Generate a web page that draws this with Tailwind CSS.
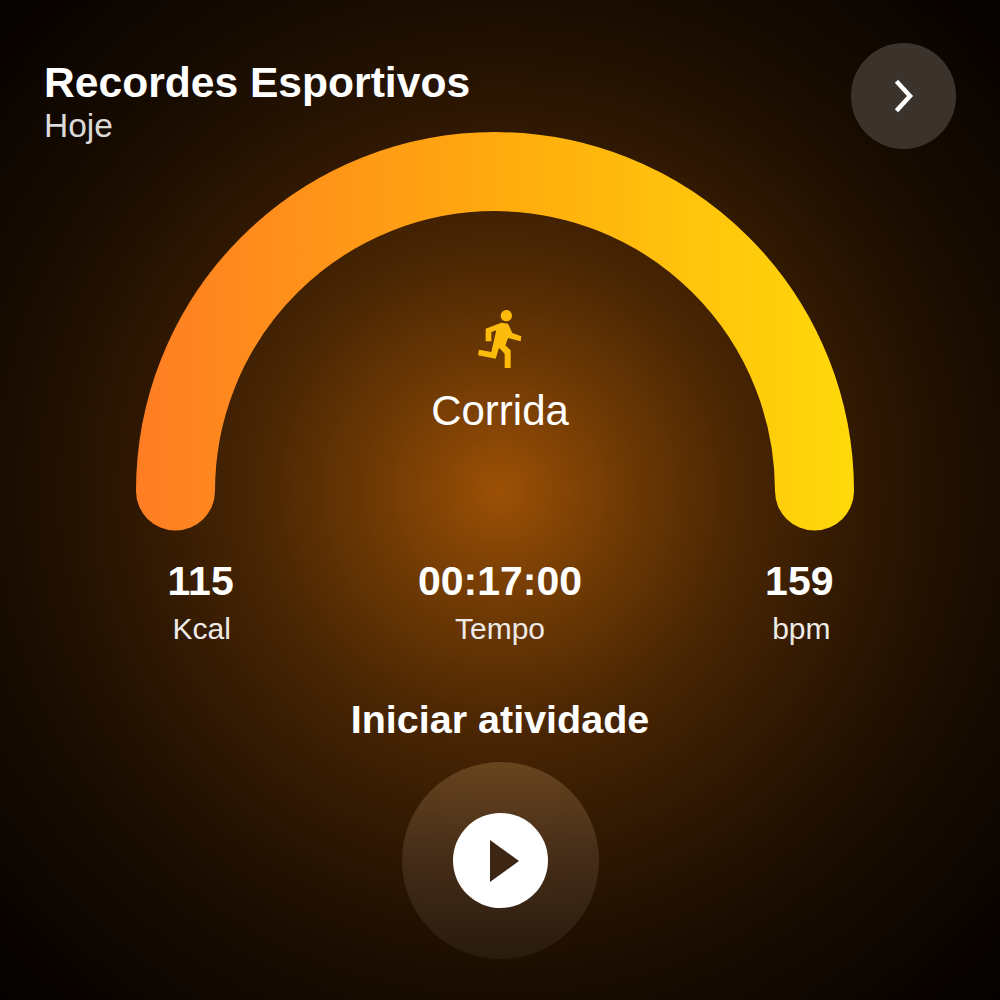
<!DOCTYPE html>
<html lang="en">
<head>
    <meta charset="UTF-8">
    <title>Recordes Esportivos</title>
    <script src="https://cdn.jsdelivr.net/npm/@tailwindcss/browser@4"></script>
</head>
<body class="bg-black">
    <main class="w-[1000px] h-[1000px] overflow-hidden flex flex-col font-['Liberation_Sans',sans-serif] text-white bg-[radial-gradient(circle_at_500px_490px,#9c5006_0px,#703a04_120px,#4a2603_240px,#2e1702_370px,#1a0d01_490px,#0a0400_640px,#030100_760px)]">
        <!-- Header -->
        <header class="flex justify-between pl-[44px] pr-[44px] pt-[43px]">
            <div class="pt-[16px]">
                <h1 class="text-[42.6px] leading-[46px] font-bold">Recordes Esportivos</h1>
                <p class="text-[33.5px] leading-[38px] mt-[2px] text-[#dcdad8]">Hoje</p>
            </div>
            <button class="w-[105px] h-[106px] rounded-full bg-[#3b322c] flex items-center justify-center">
                <svg width="24" height="36" viewBox="0 0 24 36" fill="none" stroke="white" stroke-width="4.5" stroke-linecap="square"><path d="M6 5 L18 18 L6 31"/></svg>
            </button>
        </header>

        <!-- Gauge -->
        <section class="relative h-[399px] mt-[-17px] shrink-0">
            <svg width="1000" height="399" viewBox="0 0 1000 399" fill="none">
                <defs>
                    <linearGradient id="arc" gradientUnits="userSpaceOnUse" x1="136" y1="0" x2="854" y2="0">
                        <stop offset="0" stop-color="#ff7d24"/>
                        <stop offset="0.5" stop-color="#ffaa0e"/>
                        <stop offset="1" stop-color="#ffd90a"/>
                    </linearGradient>
                </defs>
                <path d="M175.5 359 A319.5 319.5 0 0 1 814.5 359" stroke="url(#arc)" stroke-width="79" stroke-linecap="round"/>
            </svg>
            <div class="absolute left-0 right-0 top-[175px] flex flex-col items-center">
                <svg width="53.33" height="63.33" viewBox="100 50 160 190" fill="#fdbb0c">
                    <circle cx="200" cy="76" r="17"/>
                    <path d="M138 115 L185 97 L205 100 L218 128 L245 138 L243 153 L205 143 L197 165 L213 180 L213 233 L195 233 L195 190 L178 172 L168 205 L115 195 L118 178 L155 185 L170 120 L155 125 L155 153 L138 153 Z"/>
                </svg>
                <p class="text-[42px] leading-[44px] mt-[19px]">Corrida</p>
            </div>
        </section>

        <!-- Stats -->
        <section class="grid grid-cols-3 px-[51px] mt-[28px] text-center">
            <div>
                <p class="text-[41px] leading-[44px] font-bold">115</p>
                <p class="text-[30px] leading-[32px] mt-[10px] pl-[2px] text-[#eeeae6]">Kcal</p>
            </div>
            <div>
                <p class="text-[41px] leading-[44px] font-bold">00:17:00</p>
                <p class="text-[30px] leading-[32px] mt-[10px] text-[#eeeae6]">Tempo</p>
            </div>
            <div>
                <p class="text-[41px] leading-[44px] font-bold">159</p>
                <p class="text-[30px] leading-[32px] mt-[10px] pl-[4px] text-[#eeeae6]">bpm</p>
            </div>
        </section>

        <!-- Start activity -->
        <section class="flex flex-col items-center mt-[51px]">
            <h2 class="text-[39.5px] leading-[46px] font-bold">Iniciar atividade</h2>
            <button class="w-[197px] h-[197px] mt-[20px] rounded-full bg-linear-to-b from-[#ffc98a]/20 via-[#ffd8c8]/11 to-white/5 flex items-center justify-center">
                <span class="w-[95px] h-[95px] rounded-full bg-white flex items-center justify-center">
                    <svg width="32" height="44" viewBox="0 0 32 44" class="ml-[10px]"><path d="M1 1 L30 22 L1 43 Z" fill="#3d2514"/></svg>
                </span>
            </button>
        </section>
    </main>
</body>
</html>
